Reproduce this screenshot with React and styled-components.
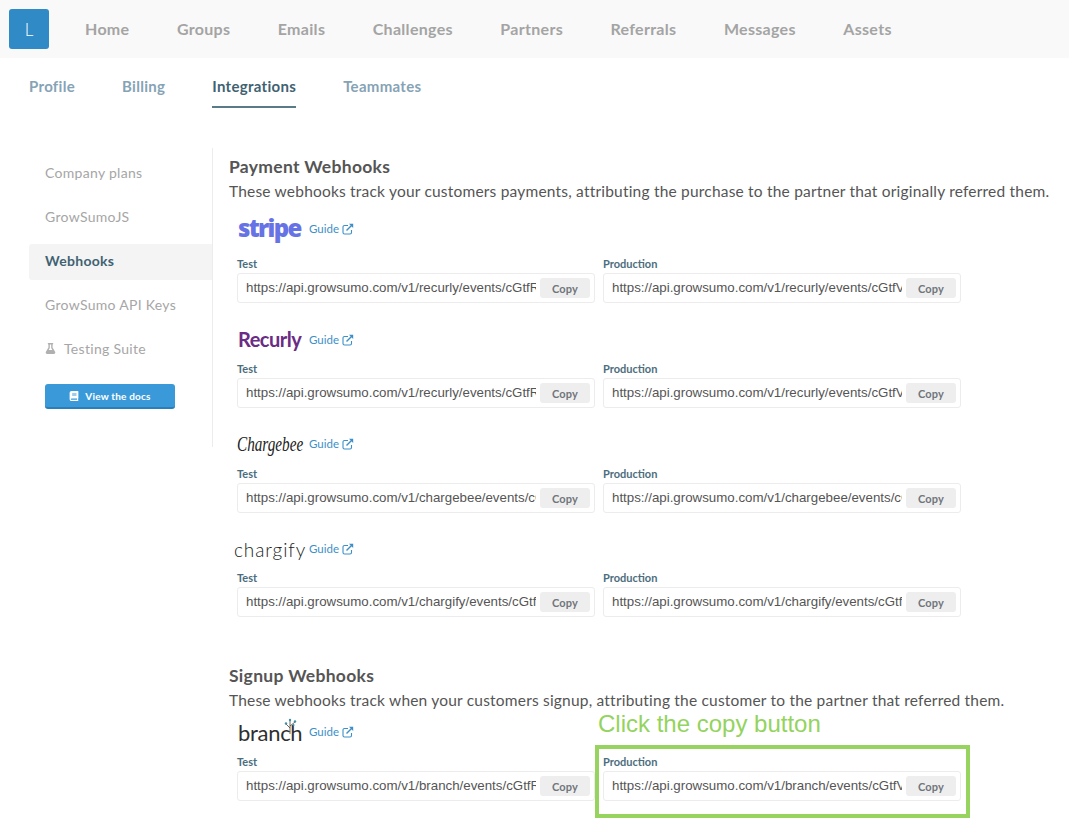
import React from "react";
import styled, { createGlobalStyle } from "styled-components";
import { FaBook, FaFlask } from "react-icons/fa";

const GlobalStyle = createGlobalStyle`
  html, body {
    margin: 0;
    padding: 0;
    background: #fff;
    font-family: Lato, "Open Sans", sans-serif;
  }
`;

const Page = styled.div`
  position: relative;
  width: 1069px;
  height: 828px;
  overflow: hidden;
`;

const TopNav = styled.nav`
  height: 58px;
  background: #f9f9f9;
  display: flex;
  align-items: center;
  padding-left: 9px;
`;

const Avatar = styled.div`
  width: 40px;
  height: 40px;
  border-radius: 3px;
  background: #2f8ac6;
  color: #fff;
  font-size: 17px;
  font-weight: 300;
  display: flex;
  align-items: center;
  justify-content: center;
  margin-right: 36px;
`;

const NavLink = styled.a`
  font-size: 16px;
  font-weight: 700;
  letter-spacing: 0.3px;
  color: #a4a4a4;
  margin: 0 47.5px 2px 0;
`;

const Tabs = styled.div`
  height: 50px;
  display: flex;
  padding-left: 29px;
  gap: 47px;
`;

const Tab = styled.a`
  height: 48px;
  line-height: 57px;
  font-size: 15px;
  font-weight: 700;
  letter-spacing: 0.3px;
  color: ${p => (p.$active ? "#3f6272" : "#86a3b5")};
  border-bottom: 2px solid ${p => (p.$active ? "#5b7a88" : "transparent")};
`;

const Main = styled.div`
  display: flex;
  align-items: flex-start;
  padding: 40px 0 0 29px;
`;

const Sidebar = styled.aside`
  width: 183px;
  height: 291px;
  padding-top: 8px;
  border-right: 1px solid #ececec;
  display: flex;
  flex-direction: column;
  gap: 8px;
`;

const SideItem = styled.a`
  box-sizing: border-box;
  height: 36px;
  display: flex;
  align-items: center;
  gap: 8px;
  padding: 0 0 3px 16px;
  font-size: 14px;
  letter-spacing: 0.3px;
  border-radius: 3px 0 0 3px;
  font-weight: ${p => (p.$active ? 700 : 400)};
  color: ${p => (p.$active ? "#3f6272" : "#a6a6a6")};
  background: ${p => (p.$active ? "#f4f4f4" : "transparent")};
`;

const DocsButton = styled.button`
  width: 130px;
  height: 25px;
  margin: 8px 0 0 16px;
  padding: 0;
  border: 0;
  border-bottom: 2px solid #2a7fb8;
  border-radius: 3px;
  background: #3a9ad9;
  color: #fff;
  font-family: inherit;
  font-size: 10px;
  font-weight: 700;
  letter-spacing: 0.2px;
  display: flex;
  align-items: center;
  justify-content: center;
  gap: 6px;
`;

const Content = styled.main`
  padding: 10px 0 0 16px;
  width: 830px;
`;

const Heading = styled.h2`
  margin: ${p => p.$top || 0}px 0 6px;
  height: 18px;
  line-height: 18px;
  font-size: 17.5px;
  font-weight: 700;
  letter-spacing: 0.3px;
  color: #555;
`;

const Lead = styled.p`
  margin: 0 0 ${p => p.$after}px;
  height: 18px;
  line-height: 18px;
  font-size: 15.5px;
  letter-spacing: 0.2px;
  color: #555;
  white-space: nowrap;
`;

const Group = styled.section`
  margin: ${p => p.$top || 0}px 0 0 8px;
`;

const LogoRow = styled.div`
  height: 30px;
  margin-bottom: ${p => p.$after}px;
  display: flex;
  align-items: center;
`;

const LogoBox = styled.div`
  width: 72px;
  white-space: nowrap;
  position: relative;
`;

const StripeLogo = styled.span`
  display: block;
  margin: -4px 0 0 1px;
  font-family: "Open Sans", sans-serif;
  font-size: 24px;
  font-weight: 800;
  letter-spacing: -1.7px;
  color: #6772e5;
`;

const RecurlyLogo = styled.span`
  display: block;
  margin: -2px 0 0 1px;
  font-size: 20px;
  font-weight: 700;
  letter-spacing: -0.5px;
  color: #6a2c84;
`;

const ChargebeeLogo = styled.span`
  display: inline-block;
  font-family: "Liberation Serif", serif;
  font-style: italic;
  font-size: 20px;
  color: #222;
  transform: scaleX(0.76);
  transform-origin: left center;
`;

const ChargifyLogo = styled.span`
  margin-left: -3px;
  font-size: 19px;
  font-weight: 300;
  letter-spacing: 0.9px;
  color: #222;
`;

const BranchLogo = styled.span`
  margin-left: 1px;
  font-size: 22px;
  font-weight: 400;
  letter-spacing: -0.3px;
  color: #2f2f2f;
`;

const Sprout = styled.svg`
  position: absolute;
  left: 47px;
  top: -1px;
`;

const Guide = styled.a`
  display: flex;
  align-items: center;
  gap: 3px;
  margin-bottom: 1px;
  font-size: 11.5px;
  color: #3d8fc8;
`;

const Fields = styled.div`
  display: grid;
  grid-template-columns: 358px 358px;
  gap: 8px;
`;

const Label = styled.div`
  height: 14px;
  line-height: 14px;
  margin-bottom: 2px;
  font-size: 11px;
  font-weight: 700;
  color: #4c6d7d;
`;

const FieldBox = styled.div`
  box-sizing: border-box;
  height: 30px;
  border: 1px solid #ececec;
  border-radius: 3px;
  display: flex;
  align-items: center;
  padding: 0 4px 0 8px;
  gap: 4px;
`;

const Url = styled.span`
  width: 290px;
  overflow: hidden;
  white-space: nowrap;
  font-family: "Liberation Sans", sans-serif;
  font-size: 13.3px;
  line-height: 16px;
  margin-bottom: 1px;
  color: #555;
`;

const CopyButton = styled.button`
  width: 50px;
  height: 20px;
  padding: 0;
  border: 0;
  border-radius: 3px;
  background: #eee;
  color: #70757c;
  font-family: inherit;
  font-size: 11px;
  font-weight: 700;
  letter-spacing: 0.2px;
`;

const Callout = styled.div`
  position: absolute;
  left: 598px;
  top: 710px;
  font-family: "Liberation Sans", sans-serif;
  font-size: 24px;
  line-height: 28px;
  color: #93d35e;
`;

const Highlight = styled.div`
  position: absolute;
  left: 595px;
  top: 745px;
  width: 375px;
  height: 73px;
  box-sizing: border-box;
  border: 4.5px solid #96d35f;
`;

const ExternalIcon = () => (
  <svg width="12" height="12" viewBox="0 0 12 12" fill="none" stroke="currentColor">
    <path d="M9.5 7v2.5a1.5 1.5 0 0 1-1.5 1.5H2.5A1.5 1.5 0 0 1 1 9.5V4a1.5 1.5 0 0 1 1.5-1.5H6" strokeWidth="1.1" />
    <path d="M4.5 7.5L10 2" strokeWidth="1.4" />
    <path d="M7 .8h4.2V5z" fill="currentColor" stroke="none" />
  </svg>
);

const Field = ({ label, url }) => (
  <div>
    <Label>{label}</Label>
    <FieldBox>
      <Url>{url}</Url>
      <CopyButton>Copy</CopyButton>
    </FieldBox>
  </div>
);

const Integration = ({ logo, name, after, top }) => (
  <Group $top={top}>
    <LogoRow $after={after}>
      <LogoBox>{logo}</LogoBox>
      <Guide>
        Guide <ExternalIcon />
      </Guide>
    </LogoRow>
    <Fields>
      <Field label="Test" url={`https://api.growsumo.com/v1/${name}/events/cGtfR`} />
      <Field label="Production" url={`https://api.growsumo.com/v1/${name}/events/cGtfV`} />
    </Fields>
  </Group>
);

const navItems = ["Home", "Groups", "Emails", "Challenges", "Partners", "Referrals", "Messages", "Assets"];
const tabs = ["Profile", "Billing", "Integrations", "Teammates"];

export default function App() {
  return (
    <Page>
      <GlobalStyle />
      <TopNav>
        <Avatar>L</Avatar>
        {navItems.map(item => (
          <NavLink key={item}>{item}</NavLink>
        ))}
      </TopNav>
      <Tabs>
        {tabs.map(tab => (
          <Tab key={tab} $active={tab === "Integrations"}>
            {tab}
          </Tab>
        ))}
      </Tabs>
      <Main>
        <Sidebar>
          <SideItem>Company plans</SideItem>
          <SideItem>GrowSumoJS</SideItem>
          <SideItem $active>Webhooks</SideItem>
          <SideItem>GrowSumo API Keys</SideItem>
          <SideItem>
            <FaFlask size={11} color="#b0b0b0" /> Testing Suite
          </SideItem>
          <DocsButton>
            <FaBook size={10} /> View the docs
          </DocsButton>
        </Sidebar>
        <Content>
          <Heading>Payment Webhooks</Heading>
          <Lead $after={14}>These webhooks track your customers payments, attributing the purchase to the partner that originally referred them.</Lead>
          <Integration name="recurly" after={13} logo={<StripeLogo>stripe</StripeLogo>} />
          <Integration name="recurly" top={22} after={7} logo={<RecurlyLogo>Recurly</RecurlyLogo>} />
          <Integration name="chargebee" top={21} after={8} logo={<ChargebeeLogo>Chargebee</ChargebeeLogo>} />
          <Integration name="chargify" top={21} after={7} logo={<ChargifyLogo>chargify</ChargifyLogo>} />
          <Heading $top={50}>Signup Webhooks</Heading>
          <Lead $after={8}>These webhooks track when your customers signup, attributing the customer to the partner that referred them.</Lead>
          <Integration
            name="branch"
            after={8}
            logo={
              <>
                <BranchLogo>branch</BranchLogo>
                <Sprout width="14" height="16" viewBox="0 0 14 16" fill="none">
                  <path d="M6 16V3M6 10L2 6M6 8l5-4" stroke="#444" strokeWidth="0.8" />
                  <circle cx="6" cy="2" r="1.2" fill="#3f8fa3" />
                  <circle cx="2" cy="5.5" r="1.2" fill="#3f8fa3" />
                  <circle cx="11" cy="3.5" r="1.2" fill="#3f8fa3" />
                  <circle cx="9.5" cy="7" r="1" fill="#3f8fa3" />
                </Sprout>
              </>
            }
          />
        </Content>
      </Main>
      <Callout>Click the copy button</Callout>
      <Highlight />
    </Page>
  );
}
